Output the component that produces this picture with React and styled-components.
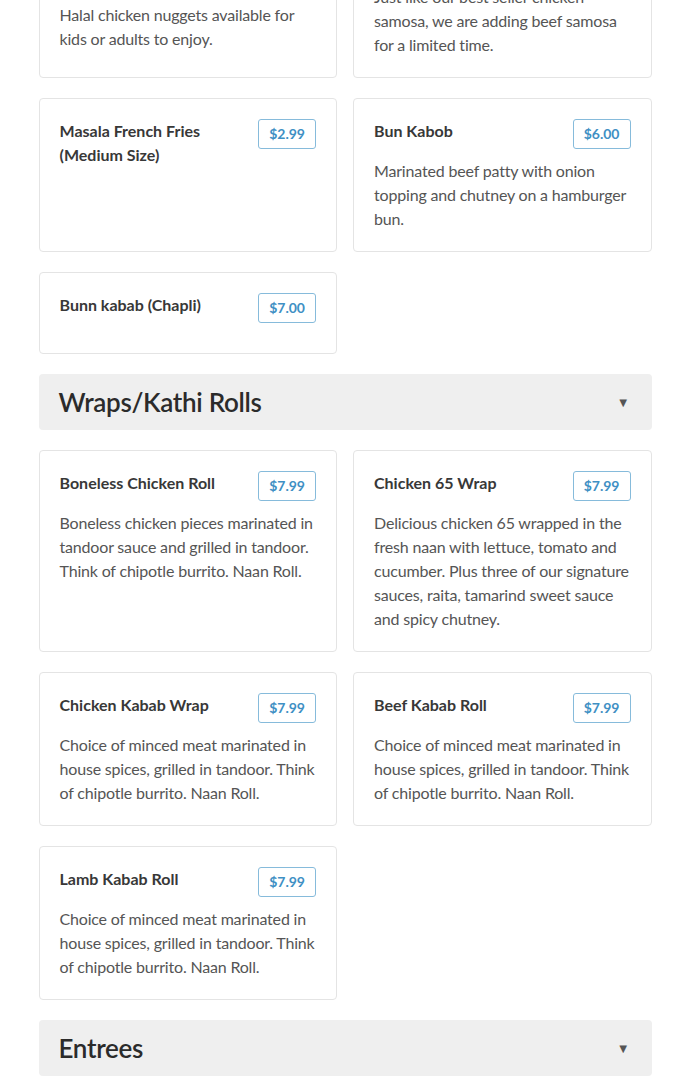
import React from "react";
import styled, { createGlobalStyle } from "styled-components";

const Global = createGlobalStyle`
  html, body { margin: 0; padding: 0; background: #fff; }
  body { font-family: Lato, "Open Sans", sans-serif; color: #333; overflow: hidden; }
`;

const Page = styled.div`
  width: 613px;
  margin: -76px auto 0;
  display: flex;
  flex-direction: column;
  gap: 20px;
`;

const Section = styled.section`
  display: flex;
  flex-direction: column;
  gap: 20px;
`;

const Header = styled.div`
  height: 56px;
  box-sizing: border-box;
  background: #efefef;
  border-radius: 4px;
  display: flex;
  align-items: center;
  justify-content: space-between;
  padding: 0 22px 0 20px;
`;

const HeaderTitle = styled.h2`
  margin: 0;
  font-family: Lato, sans-serif;
  font-size: 26px;
  font-weight: 600;
  color: #2b2b2b;
  letter-spacing: -0.3px;
`;

const Caret = styled.span`
  font-size: 13px;
  color: #555;
  line-height: 1;
`;

const Grid = styled.div`
  display: grid;
  grid-template-columns: 1fr 1fr;
  column-gap: 16px;
  row-gap: 20px;
`;

const Card = styled.div`
  border: 1px solid #e4e4e4;
  border-radius: 4px;
  padding: 20px;
  background: #fff;
  display: flex;
  flex-direction: column;
`;

const TitleRow = styled.div`
  display: flex;
  justify-content: space-between;
  align-items: flex-start;
  gap: 16px;
`;

const Name = styled.h3`
  margin: 0;
  font-size: 16px;
  line-height: 24px;
  font-weight: 700;
  color: #383838;
`;

const Price = styled.span`
  flex-shrink: 0;
  border: 1px solid #86bbdb;
  border-radius: 3px;
  padding: 4px 10px;
  font-size: 14px;
  line-height: 20px;
  font-weight: 700;
  color: #3f90c4;
`;

const Desc = styled.p`
  margin: 10px 0 0;
  font-size: 16px;
  line-height: 24px;
  letter-spacing: -0.18px;
  color: #555;
`;

const Item = ({ name, price, desc }) => (
  <Card>
    <TitleRow>
      <Name>{name}</Name>
      <Price>{price}</Price>
    </TitleRow>
    <Desc>{desc}</Desc>
  </Card>
);

const sides = [
  { name: "Chicken Nuggets (10 Pieces)", price: "$4.99", desc: "Halal chicken nuggets available for kids or adults to enjoy." },
  { name: "Beef Samosa", price: "$1.99", desc: "Just like our best seller chicken samosa, we are adding beef samosa for a limited time." },
  { name: "Masala French Fries (Medium Size)", price: "$2.99", desc: "" },
  { name: "Bun Kabob", price: "$6.00", desc: "Marinated beef patty with onion topping and chutney on a hamburger bun." },
  { name: "Bunn kabab (Chapli)", price: "$7.00", desc: "" },
];

const wraps = [
  { name: "Boneless Chicken Roll", price: "$7.99", desc: "Boneless chicken pieces marinated in tandoor sauce and grilled in tandoor. Think of chipotle burrito. Naan Roll." },
  { name: "Chicken 65 Wrap", price: "$7.99", desc: "Delicious chicken 65 wrapped in the fresh naan with lettuce, tomato and cucumber. Plus three of our signature sauces, raita, tamarind sweet sauce and spicy chutney." },
  { name: "Chicken Kabab Wrap", price: "$7.99", desc: "Choice of minced meat marinated in house spices, grilled in tandoor. Think of chipotle burrito. Naan Roll." },
  { name: "Beef Kabab Roll", price: "$7.99", desc: "Choice of minced meat marinated in house spices, grilled in tandoor. Think of chipotle burrito. Naan Roll." },
  { name: "Lamb Kabab Roll", price: "$7.99", desc: "Choice of minced meat marinated in house spices, grilled in tandoor. Think of chipotle burrito. Naan Roll." },
];

export default function App() {
  return (
    <>
      <Global />
      <Page>
        <Grid>
          {sides.map((it) => (
            <Item key={it.name} {...it} />
          ))}
        </Grid>
        <Section>
          <Header>
            <HeaderTitle>Wraps/Kathi Rolls</HeaderTitle>
            <Caret>▼</Caret>
          </Header>
          <Grid>
            {wraps.map((it) => (
              <Item key={it.name} {...it} />
            ))}
          </Grid>
        </Section>
        <Section>
          <Header>
            <HeaderTitle>Entrees</HeaderTitle>
            <Caret>▼</Caret>
          </Header>
        </Section>
      </Page>
    </>
  );
}
